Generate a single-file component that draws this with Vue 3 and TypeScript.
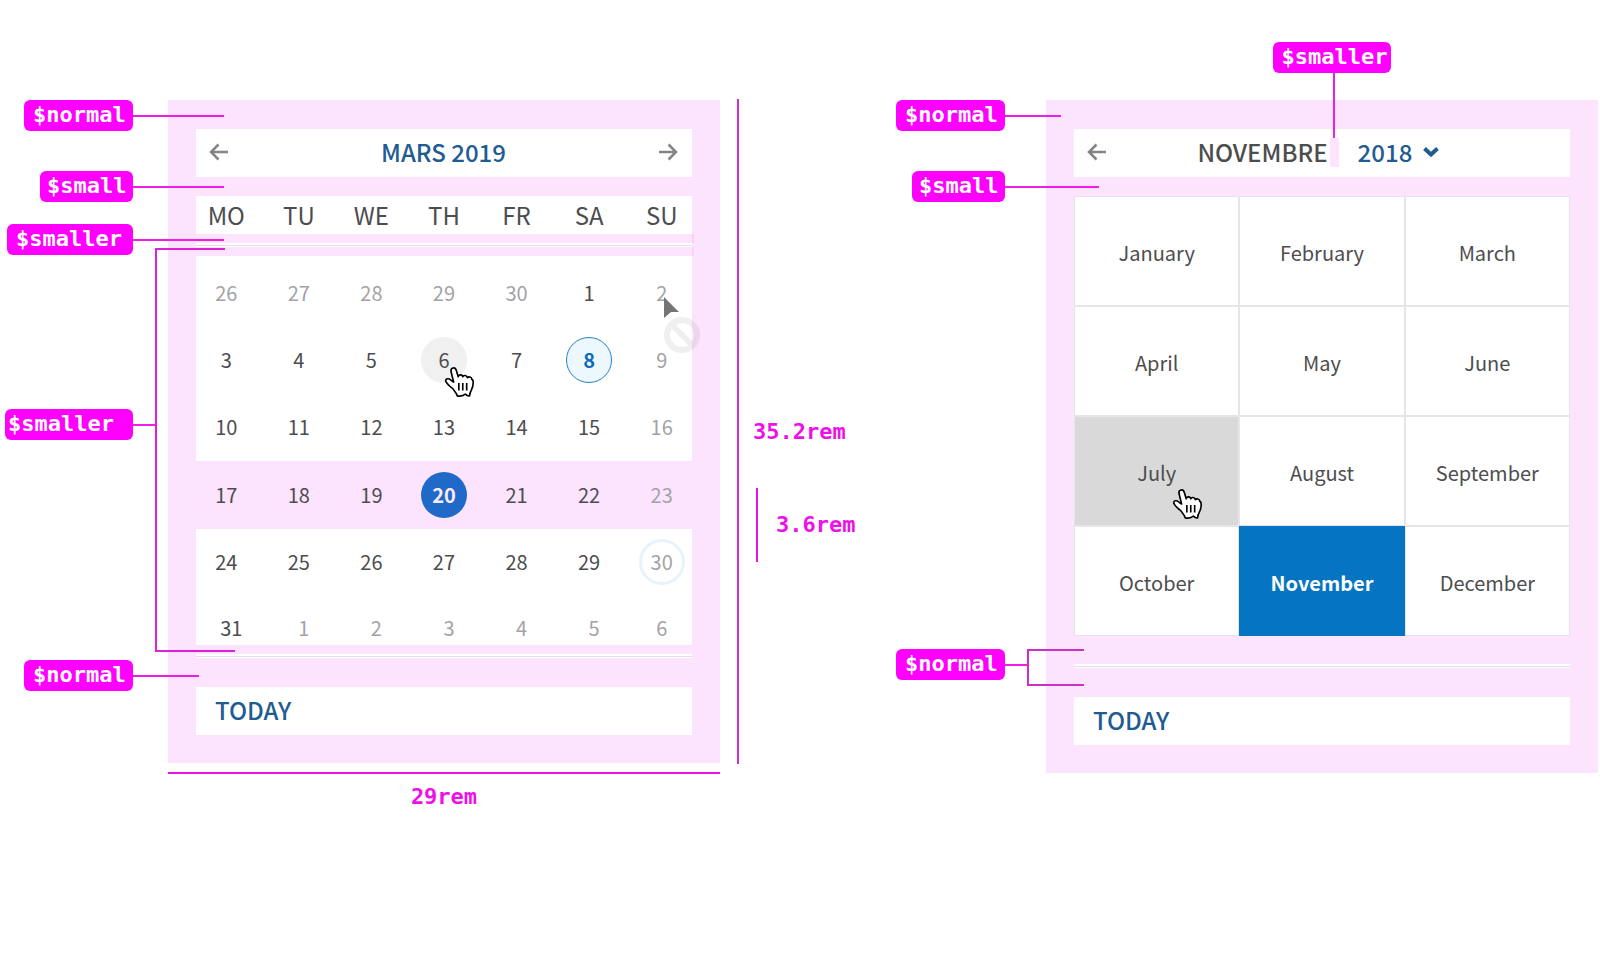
<script setup lang="ts">
import { ref } from 'vue'

interface Day {
  n: number
  off?: boolean
  mark?: 'hover' | 'today' | 'selected' | 'ring' | 'denied'
}

const weekdays = ['MO', 'TU', 'WE', 'TH', 'FR', 'SA', 'SU']

const weeks: Day[][] = [
  [{ n: 26, off: true }, { n: 27, off: true }, { n: 28, off: true }, { n: 29, off: true }, { n: 30, off: true }, { n: 1 }, { n: 2, off: true, mark: 'denied' }],
  [{ n: 3 }, { n: 4 }, { n: 5 }, { n: 6, mark: 'hover' }, { n: 7 }, { n: 8, mark: 'today' }, { n: 9, off: true }],
  [{ n: 10 }, { n: 11 }, { n: 12 }, { n: 13 }, { n: 14 }, { n: 15 }, { n: 16, off: true }],
  [{ n: 17 }, { n: 18 }, { n: 19 }, { n: 20, mark: 'selected' }, { n: 21 }, { n: 22 }, { n: 23, off: true }],
  [{ n: 24 }, { n: 25 }, { n: 26 }, { n: 27 }, { n: 28 }, { n: 29 }, { n: 30, off: true, mark: 'ring' }],
  [{ n: 31 }, { n: 1, off: true }, { n: 2, off: true }, { n: 3, off: true }, { n: 4, off: true }, { n: 5, off: true }, { n: 6, off: true }],
]

const months = [
  'January', 'February', 'March', 'April', 'May', 'June',
  'July', 'August', 'September', 'October', 'November', 'December',
]
const hovered = 'July'
const selected = ref('November')
const year = ref('2018')
const years = ['2017', '2018', '2019']
</script>

<template>
  <main class="board">
    <section class="figure days" aria-label="Day picker">
      <div class="panel">
        <header class="bar">
          <button class="arrow" type="button" aria-label="Previous month">
            <svg viewBox="0 0 20 18"><path d="M19 9H2M9.500 1.500 2 9l7.500 7.500" /></svg>
          </button>
          <button class="title link" type="button">MARS 2019</button>
          <button class="arrow" type="button" aria-label="Next month">
            <svg viewBox="0 0 20 18"><path d="M1 9h17M10.500 1.500 18 9l-7.500 7.500" /></svg>
          </button>
        </header>

        <table class="calendar">
          <thead>
            <tr><th v-for="d in weekdays" :key="d" scope="col">{{ d }}</th></tr>
          </thead>
          <tbody>
            <tr class="rule-row"><td colspan="7"><div class="gap"></div><div class="rule"></div><div class="gap"></div></td></tr>
            <tr v-for="(week, w) in weeks" :key="w" class="week">
              <td v-for="(day, i) in week" :key="i">
                <button type="button" class="day" :class="[day.mark, { off: day.off }]">
                  {{ day.n }}
                  <svg v-if="day.mark === 'hover'" class="hand" viewBox="0 0 88 92">
                    <path d="M26 46 18 14C16 1 31-1 34 10l6 20c1-8 13-8 14 0 2-6 13-5 14 3 3-5 14-3 14 5 4 1 4 6 4 10 0 12-3 18-6 24-4 6-5 11-5 17-6 1-9-3-13-6-4 5-9 8-25 6-1-9-8-14-13-22C11 57 4 50 2 44c-2-9 9-10 14-5 4 3 6 6 10 7Z" />
                    <path d="M42 49v23M54 49v23M66 49v23" />
                  </svg>
                  <svg v-if="day.mark === 'denied'" class="pointer" viewBox="0 0 36 56">
                    <path d="M0 0 15 15 7 15 0 21Z" fill="#757575" />
                    <g class="forbid">
                      <circle cx="18" cy="38" r="15" />
                      <path d="M8 28 28 48" />
                    </g>
                  </svg>
                </button>
              </td>
            </tr>
          </tbody>
        </table>
        <div class="gap"></div>
        <div class="rule"></div>
        <footer class="bar foot"><button class="link" type="button">TODAY</button></footer>
      </div>

      <div class="callout at-top reach-long"><span class="tag normal">$normal</span></div>
      <div class="callout at-head reach-long"><span class="tag small">$small</span></div>
      <div class="callout at-rule reach-long"><span class="tag smaller">$smaller</span></div>
      <div class="callout at-weeks reach-bracket"><span class="tag tight">$smaller</span></div>
      <div class="callout at-foot reach-inner"><span class="tag normal">$normal</span></div>
      <div class="bracket tall"></div>
      <div class="stub"></div>

      <div class="measure full"><span>35.2rem</span></div>
      <div class="measure row"><span>3.6rem</span></div>
      <div class="measure wide"><span>29rem</span></div>
    </section>

    <section class="figure year" aria-label="Month picker">
      <div class="panel">
        <header class="bar">
          <button class="arrow" type="button" aria-label="Back">
            <svg viewBox="0 0 20 18"><path d="M19 9H2M9.500 1.500 2 9l7.500 7.500" /></svg>
          </button>
          <div class="heading">
            <span class="month-name">NOVEMBRE</span>
            <span class="swatch">
              <span class="drop"></span>
              <span class="tag over">$smaller</span>
            </span>
            <label class="year-field">
              <select v-model="year" class="link" aria-label="Year">
                <option v-for="y in years" :key="y">{{ y }}</option>
              </select>
              <svg viewBox="0 0 16 10"><path d="m1.500 1.500 6.500 6 6.500-6" /></svg>
            </label>
          </div>
        </header>
        <div class="months">
          <button
            v-for="m in months"
            :key="m"
            type="button"
            class="month"
            :class="{ hovered: m === hovered, chosen: m === selected }"
            @click="selected = m"
          >
            {{ m }}
            <svg v-if="m === hovered" class="hand" viewBox="0 0 88 92">
              <path d="M26 46 18 14C16 1 31-1 34 10l6 20c1-8 13-8 14 0 2-6 13-5 14 3 3-5 14-3 14 5 4 1 4 6 4 10 0 12-3 18-6 24-4 6-5 11-5 17-6 1-9-3-13-6-4 5-9 8-25 6-1-9-8-14-13-22C11 57 4 50 2 44c-2-9 9-10 14-5 4 3 6 6 10 7Z" />
              <path d="M42 49v23M54 49v23M66 49v23" />
            </svg>
          </button>
        </div>
        <div class="rule"></div>
        <footer class="bar foot"><button class="link" type="button">TODAY</button></footer>
      </div>

      <div class="callout at-top reach-short"><span class="tag normal">$normal</span></div>
      <div class="callout at-head reach-mid"><span class="tag small">$small</span></div>
      <div class="callout at-base reach-fork"><span class="tag normal">$normal</span></div>
      <div class="bracket fork"></div>
    </section>
  </main>
</template>

<style>
body {
  margin: 0;
  background: #fff;
}
</style>

<style scoped>
.board {
  display: grid;
  grid-template-columns: minmax(0, 1fr) minmax(0, 1fr);
  column-gap: 326px;
  align-items: start;
  padding: 100px 2px 0 168px;
  min-height: 100vh;
  box-sizing: border-box;
  font-family: "Noto Sans CJK JP", "Noto Sans", sans-serif;
  color: #4d4d4f;
}
.figure {
  position: relative;
}
.panel {
  padding: 29px 28px 28px;
  background: #fde4fe;
}
button,
select {
  appearance: none;
  border: 0;
  margin: 0;
  padding: 0;
  background: none;
  font: inherit;
  color: inherit;
  cursor: pointer;
}
.bar {
  display: flex;
  align-items: center;
  justify-content: space-between;
  box-sizing: border-box;
  height: 48px;
  padding: 0 14px 2px 13px;
  margin-bottom: 19px;
  background: #fff;
  font-size: 24px;
  line-height: 46px;
  font-weight: 500;
}
.foot {
  margin: 29px 0 0;
  padding: 0 19px 2px;
}
.link {
  color: #1f5c92;
}
.arrow {
  display: flex;
}
.arrow svg {
  width: 20px;
  height: 18px;
  fill: none;
  stroke: #848484;
  stroke-width: 2.5;
}

.calendar {
  width: calc(100% + 12px);
  margin: 0 -6px;
  border-spacing: 0;
  table-layout: fixed;
  /* keeps the panel's side margins visible around the wider table */
  background: linear-gradient(#fff, #fff) center / calc(100% - 12px) 100% no-repeat;
}
th {
  height: 38px;
  padding: 0;
  font-size: 24px;
  line-height: 38px;
  font-weight: 400;
}
td {
  padding: 0;
  text-align: center;
}
.gap {
  height: 9px;
  background: #fde4fe;
}
.rule-row .gap {
  box-shadow: 2px 0 #fad0f9;
}
.rule {
  height: 4px;
  background: linear-gradient(#e0e0e4, #e0e0e4) center / 100% 1px no-repeat #fff;
}
.rule-row td {
  padding: 0 6px;
}
.week td {
  height: 66px;
  font-size: 20px;
  line-height: 28px;
}
.week:nth-child(2) td {
  height: 68px;
  padding-top: 3px;
}
.week:nth-child(4) td {
  height: 68px;
}
.week:nth-child(5) {
  background: #fde4fe;
}
.week:nth-child(5) td {
  height: 68px;
}
.week:last-child td {
  height: 34px;
  padding: 16px 0 0 10px;
}
.week:last-child td:last-child {
  padding-left: 0;
}
.day {
  position: relative;
  display: flex;
  align-items: center;
  justify-content: center;
  width: 46px;
  height: 46px;
  margin: 0 auto;
  border-radius: 50%;
  box-sizing: border-box;
}
.week:last-child .day {
  height: 33px;
}
.off {
  color: #a3a3a5;
}
.hover {
  background: #f0f0f0;
}
.today {
  border: 1px solid #2381c6;
  background: #edf7fe;
  color: #0b6cb5;
  font-weight: 700;
}
.selected {
  background: #1f69c8;
  color: #fbeafe;
  font-weight: 700;
}
.ring {
  border: 3px solid #e7f3fc;
}
.hand {
  position: absolute;
  width: 29px;
  height: 30px;
  overflow: visible;
  fill: #fff;
  stroke: #000;
  stroke-width: 5;
  stroke-linejoin: round;
}
.day .hand {
  left: 24px;
  top: 30px;
}
.pointer {
  position: absolute;
  left: 25px;
  top: 27px;
  width: 36px;
  height: 56px;
  z-index: 1;
}
.forbid {
  fill: none;
  stroke: #000;
  stroke-width: 6;
  opacity: 0.06;
}

.heading {
  position: absolute;
  left: 0;
  right: 8px;
  display: flex;
  align-items: center;
  justify-content: center;
  pointer-events: none;
}
.swatch {
  position: relative;
  width: 9px;
  height: 29px;
  margin: 0 19px 0 2px;
  background: #fde4fe;
}
.year-field {
  display: flex;
  align-items: center;
  gap: 10px;
  pointer-events: auto;
}
.year-field svg {
  width: 16px;
  height: 10px;
  fill: none;
  stroke: #1f5c92;
  stroke-width: 4;
}
.months {
  display: grid;
  grid-template-columns: repeat(3, 1fr);
  grid-auto-rows: 108px;
  gap: 2px;
  padding: 1px;
  margin-bottom: 28px;
  background: #e6e6e9;
}
.month {
  position: relative;
  padding-top: 3px;
  background: #fff;
  font-size: 20px;
  line-height: 28px;
}
.hovered {
  background: #d9d9d9;
}
.chosen {
  background: #0574c2;
  box-shadow: 0 0 0 1px #0574c2;
  color: #fff;
  font-weight: 700;
}
.month .hand {
  left: 98px;
  top: 72px;
}

.callout {
  position: absolute;
  display: flex;
  align-items: center;
  justify-content: flex-end;
  height: 31px;
}
.days .callout {
  right: calc(100% + 35px);
}
.year .callout {
  right: calc(100% + 41px);
}
.callout::after {
  content: "";
  position: absolute;
  left: 100%;
  height: 2px;
  background: #ee1ee6;
}
.tag {
  box-sizing: border-box;
  height: 31px;
  border-radius: 6px;
  background: #f0f;
  color: #fff;
  padding-left: 9px;
}
.tag,
.measure {
  font-family: "DejaVu Sans Mono", monospace;
  font-size: 22px;
  line-height: 30px;
  font-weight: 700;
}
.tag.normal {
  width: 109px;
}
.tag.small {
  width: 93px;
  padding-left: 7px;
}
.tag.smaller {
  width: 126px;
}
.tag.tight {
  width: 128px;
  padding-left: 3px;
}
.at-top {
  top: 0;
}
.at-head {
  top: 71px;
}
.at-rule {
  top: 124px;
}
.at-weeks {
  top: 309px;
}
.at-foot {
  bottom: 72px;
}
.at-base {
  bottom: 93px;
}
.reach-long::after {
  width: 91px;
}
.reach-bracket::after {
  width: 22px;
}
.reach-inner::after {
  width: 66px;
}
.reach-short::after {
  width: 56px;
}
.reach-mid::after {
  width: 94px;
}
.reach-fork::after {
  width: 22px;
}
.bracket {
  position: absolute;
  box-sizing: border-box;
  border: 2px solid #e01fda;
  border-right: 0;
}
.tall {
  left: -13px;
  top: 148px;
  bottom: 111px;
  width: 70px;
}
.stub {
  position: absolute;
  left: 57px;
  bottom: 111px;
  width: 10px;
  height: 2px;
  background: #e01fda;
}
.fork {
  left: -19px;
  bottom: 87px;
  width: 57px;
  height: 37px;
  border-color: #cb2fc6;
}
.over {
  position: absolute;
  left: -57px;
  bottom: 94px;
  width: 118px;
}
.drop {
  position: absolute;
  left: 3px;
  bottom: 29px;
  width: 2px;
  height: 66px;
  background: #ee1ee6;
}
.measure {
  position: absolute;
  display: flex;
  align-items: center;
  color: #ee10e8;
}
.full {
  left: calc(100% + 17px);
  top: -1px;
  bottom: -1px;
  padding-left: 14px;
  border-left: 2px solid #d02fd0;
}
.row {
  left: calc(100% + 36px);
  top: 388px;
  height: 74px;
  padding-left: 18px;
  border-left: 2px solid #ee10e8;
}
.wide {
  left: 0;
  right: 0;
  top: calc(100% + 9px);
  justify-content: center;
  padding-top: 8px;
  border-top: 2px solid #ee10e8;
}
</style>
